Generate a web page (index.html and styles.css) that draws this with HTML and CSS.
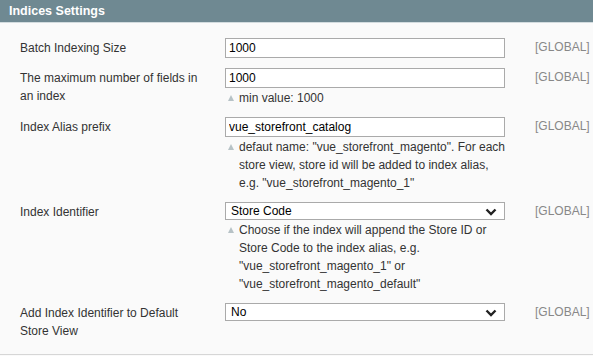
FILE: index.html
```html
<!DOCTYPE html>
<html lang="en">
<head>
    <meta charset="UTF-8">
    <title>Indices Settings</title>
    <link rel="stylesheet" href="styles.css">
</head>
<body>
    <!-- Section header -->
    <div class="section-head">Indices Settings</div>

    <!-- Settings fieldset -->
    <div class="fieldset">
        <table class="form-list">
            <tr>
                <td class="label">Batch Indexing Size</td>
                <td class="value"><input type="text" class="input-text" value="1000"></td>
                <td class="scope">[GLOBAL]</td>
            </tr>
            <tr>
                <td class="label">The maximum number of fields in an index</td>
                <td class="value">
                    <input type="text" class="input-text" value="1000">
                    <p class="note">min value: 1000</p>
                </td>
                <td class="scope">[GLOBAL]</td>
            </tr>
            <tr>
                <td class="label">Index Alias prefix</td>
                <td class="value">
                    <input type="text" class="input-text" value="vue_storefront_catalog">
                    <p class="note">defaut name: "vue_storefront_magento". For each store view, store id will be added to index alias, e.g. "vue_storefront_magento_1"</p>
                </td>
                <td class="scope">[GLOBAL]</td>
            </tr>
            <tr>
                <td class="label">Index Identifier</td>
                <td class="value">
                    <div class="select-wrap">
                        <select class="select">
                            <option>Store Code</option>
                            <option>Store ID</option>
                        </select>
                        <svg class="chevron" width="12" height="8" viewBox="0 0 12 8"><path d="M1.5 1.5 L6 6 L10.5 1.5" fill="none" stroke="#222" stroke-width="2.4"/></svg>
                    </div>
                    <p class="note">Choose if the index will append the Store ID or Store Code to the index alias, e.g. "vue_storefront_magento_1" or "vue_storefront_magento_default"</p>
                </td>
                <td class="scope">[GLOBAL]</td>
            </tr>
            <tr>
                <td class="label">Add Index Identifier to Default Store View</td>
                <td class="value">
                    <div class="select-wrap">
                        <select class="select">
                            <option>No</option>
                            <option>Yes</option>
                        </select>
                        <svg class="chevron" width="12" height="8" viewBox="0 0 12 8"><path d="M1.5 1.5 L6 6 L10.5 1.5" fill="none" stroke="#222" stroke-width="2.4"/></svg>
                    </div>
                </td>
                <td class="scope">[GLOBAL]</td>
            </tr>
        </table>
    </div>
</body>
</html>
```

FILE: styles.css
```css
/* General */
body {
    margin: 0;
    font-family: 'Liberation Sans', Arial, sans-serif;
    font-size: 12px;
    background-color: #fafafa;
    color: #333;
}

/* Section header */
.section-head {
    background: #6f8992;
    color: #fff;
    font-weight: bold;
    font-size: 12.5px;
    height: 22px;
    line-height: 22px;
    padding: 0 9px;
    border-bottom: 1px solid #d3dcdf;
}

/* Fieldset */
.fieldset {
    padding: 10px 0 9px;
    border-bottom: 1px solid #d6d6d6;
}

.form-list {
    border-collapse: collapse;
}

.form-list td {
    vertical-align: top;
    padding: 5px 0;
}

.form-list td.label {
    width: 180px;
    padding-left: 20px;
    padding-right: 25px;
    padding-top: 6px;
    line-height: 18px;
}

.form-list td.value {
    width: 280px;
}

.form-list td.scope {
    padding-left: 30px;
    padding-top: 7px;
    color: #888;
    line-height: 14px;
}

/* Inputs */
.input-text,
.select {
    box-sizing: border-box;
    width: 280px;
    height: 20px;
    margin: 0;
    border: 1px solid #aaa;
    background: #fff;
    font-family: 'Liberation Sans', Arial, sans-serif;
    font-size: 12px;
    color: #000;
    display: block;
}

.input-text {
    padding: 0 3px;
}

.select {
    height: 18px;
    appearance: none;
    -webkit-appearance: none;
    border-radius: 0;
    padding: 0 5px;
}

.select-wrap {
    position: relative;
}

.chevron {
    position: absolute;
    right: 8px;
    top: 6px;
    pointer-events: none;
}

/* Notes */
.note {
    margin: 0;
    padding: 1px 0 0 14px;
    line-height: 18px;
    position: relative;
}

.note:before {
    content: "";
    position: absolute;
    left: 3px;
    top: 7px;
    border-left: 3.5px solid transparent;
    border-right: 3.5px solid transparent;
    border-bottom: 6px solid #b7c2c6;
}
```
